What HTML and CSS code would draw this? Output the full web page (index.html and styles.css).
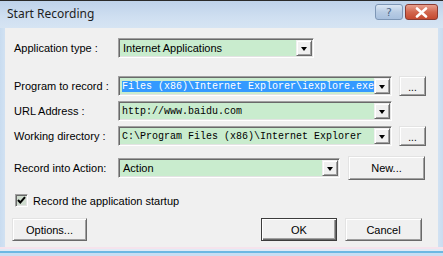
FILE: index.html
```html
<!DOCTYPE html>
<html>
<head>
<meta charset="utf-8">
<link rel="stylesheet" href="styles.css">
</head>
<body>
<div class="window">
  <div class="titlebar">
    <span class="title">Start Recording</span>
    <div class="tbtns">
      <span class="tb help">?</span>
      <span class="tb close"><svg width="13" height="11" viewBox="0 0 13 11"><path d="M2 1.5 L11 9.5 M11 1.5 L2 9.5" stroke="#fff" stroke-width="2.6" stroke-linecap="round"/></svg></span>
    </div>
  </div>
  <div class="client">
    <div class="row r1">
      <span class="label">Application type :</span>
      <div class="combo w-app"><span class="val sans">Internet Applications</span><span class="drop"><i></i></span></div>
    </div>
    <div class="row r2">
      <span class="label">Program to record :</span>
      <div class="combo w-full"><span class="val mono"><span class="sel">Files (x86)\Internet Explorer\iexplore.exe</span></span><span class="drop"><i></i></span></div>
      <button class="btn dots">...</button>
    </div>
    <div class="row r3">
      <span class="label">URL Address :</span>
      <div class="combo w-full"><span class="val mono">http://www.baidu.com</span><span class="drop"><i></i></span></div>
    </div>
    <div class="row r4">
      <span class="label">Working directory :</span>
      <div class="combo w-full"><span class="val mono">C:\Program Files (x86)\Internet Explorer</span><span class="drop"><i></i></span></div>
      <button class="btn dots">...</button>
    </div>
    <div class="row r5">
      <span class="label">Record into Action:</span>
      <div class="combo w-act"><span class="val sans">Action</span><span class="drop"><i></i></span></div>
      <button class="btn new">New...</button>
    </div>
    <div class="row r6">
      <span class="check"><svg width="9" height="9" viewBox="0 0 9 9"><path d="M1 4 L3.3 6.5 L8 1.2" stroke="#000" stroke-width="2" fill="none"/></svg></span>
      <span class="chklabel">Record the application startup</span>
    </div>
    <div class="row r7">
      <button class="btn opt">Options...</button>
      <span class="spacer"></span>
      <button class="btn ok">OK</button>
      <button class="btn cancel">Cancel</button>
    </div>
  </div>
  <div class="bottom"></div>
</div>
</body>
</html>
```
FILE: styles.css
```css
html, body { margin: 0; padding: 0; }
body { width: 443px; height: 256px; overflow: hidden; background: #cfe0f2; }

.window {
  width: 443px;
  height: 256px;
  box-sizing: border-box;
  border-top: 1px solid #2a2a2a;
  background: linear-gradient(90deg, #c9dcf0 0, #d3e3f3 6px, #d3e3f3 437px, #c9dcf0 443px);
  display: flex;
  flex-direction: column;
  font-family: "Liberation Sans", Arial, sans-serif;
}

.titlebar {
  height: 27px;
  flex: none;
  display: flex;
  align-items: center;
  padding: 0 5px 0 7px;
  background: linear-gradient(#bed2ea, #cfdff1 60%, #d6e4f3);
}
.title {
  font-family: "Noto Sans", "Liberation Sans", sans-serif;
  font-size: 12px;
  color: #1e1e1e;
  flex: 1;
  margin-top: -3px;
}
.tbtns { display: flex; gap: 2px; margin-top: -5px; }
.tb {
  height: 16px;
  box-sizing: border-box;
  border-radius: 3px;
  display: flex;
  align-items: center;
  justify-content: center;
}
.help {
  width: 28px;
  border: 1px solid #7e97b6;
  background: linear-gradient(#dce7f4, #b8cce4 50%, #a8c0de);
  color: #4f6788;
  font-family: "DejaVu Sans", sans-serif;
  font-size: 11px;
}
.close {
  width: 33px;
  border: 1px solid #8a3b32;
  background: linear-gradient(#e7a08e, #d2674f 50%, #c54a30);
}

.client {
  height: 219px;
  flex: none;
  margin: 0 5px;
  background: #f0f0f0;
  box-sizing: border-box;
  padding: 10px 9px 0 9px;
  display: flex;
  flex-direction: column;
  font-size: 11px;
  color: #000;
}
.bottom {
  flex: 1;
  background: linear-gradient(#f5e3ec 0, #f5e3ec 2px, #dfeaf5 2px, #dfeaf5 4px, #6cb8e2 4px, #6cb8e2 6px, #c8def2 6px);
}

.row { display: flex; align-items: center; flex: none; }
.r1 { margin-top: 0; height: 20px; }
.r2 { margin-top: 18px; height: 20px; }
.r3 { margin-top: 5px; height: 20px; }
.r4 { margin-top: 5px; height: 20px; }
.r5 { margin-top: 10px; height: 24px; }
.r6 { margin-top: 14px; height: 13px; }
.r7 { margin-top: 11px; height: 23px; margin-left: -2px; }

.label { width: 104px; flex: none; white-space: nowrap; }

.combo {
  height: 20px;
  box-sizing: border-box;
  border: 1px solid;
  border-color: #a0a0a0 #ffffff #ffffff #a0a0a0;
  box-shadow: inset 1px 1px #696969, inset -1px -1px #e3e3e3;
  background: #c9ecce;
  display: flex;
  align-items: center;
  padding: 1px 1px 1px 2px;
  flex: none;
  overflow: hidden;
}
.w-app { width: 196px; }
.w-full { width: 274px; }
.w-act { width: 222px; }

.val { flex: 1; white-space: nowrap; overflow: hidden; padding-left: 1px; }
.sans { font-size: 11px; padding-left: 2px; }
.mono { font-family: "Liberation Mono", "Courier New", monospace; font-size: 10px; }
.sel { background: #3399ff; color: #fff; padding: 2px 0 3px; }

.drop {
  width: 16px;
  height: 16px;
  box-sizing: border-box;
  flex: none;
  background: #f0f0f0;
  border: 1px solid;
  border-color: #f0f0f0 #696969 #696969 #f0f0f0;
  box-shadow: inset 1px 1px #fff, inset -1px -1px #a0a0a0;
  display: flex;
  align-items: center;
  justify-content: center;
}
.drop i {
  width: 0; height: 0;
  border-left: 3.5px solid transparent;
  border-right: 3.5px solid transparent;
  border-top: 4px solid #000;
  margin-top: 1px;
}

.btn {
  font-family: "Liberation Sans", Arial, sans-serif;
  font-size: 11px;
  color: #000;
  background: #f0f0f0;
  box-sizing: border-box;
  border: 1px solid;
  border-color: #e3e3e3 #696969 #696969 #e3e3e3;
  box-shadow: inset 1px 1px #fff, inset -1px -1px #a0a0a0;
  padding: 0;
  flex: none;
}
.dots { width: 27px; height: 20px; margin-left: 7px; font-size: 10px; padding-top: 2px; }
.new { width: 77px; height: 24px; margin-left: 8px; }
.opt { width: 75px; height: 23px; }
.spacer { flex: 1; }
.ok {
  width: 76px; height: 23px;
  border-color: #3c3c3c;
  box-shadow: inset 1px 1px #fff, inset -1px -1px #696969, inset -2px -2px #a0a0a0;
}
.cancel { width: 77px; height: 23px; margin-left: 8px; margin-right: 7px; }

.check {
  width: 13px;
  height: 13px;
  box-sizing: border-box;
  margin-left: 1px;
  border: 1px solid;
  border-color: #a0a0a0 #fff #fff #a0a0a0;
  box-shadow: inset 1px 1px #696969, inset -1px -1px #e3e3e3;
  background: #cfdccf;
  display: flex;
  align-items: center;
  justify-content: center;
}
.chklabel { margin-left: 5px; font-size: 11px; }
```
